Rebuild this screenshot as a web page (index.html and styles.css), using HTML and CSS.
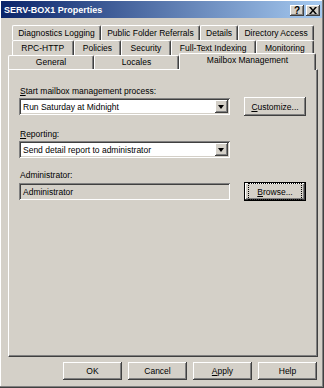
FILE: index.html
```html
<!DOCTYPE html>
<html lang="en">
<head>
  <meta charset="UTF-8">
  <title>SERV-BOX1 Properties</title>
  <link rel="stylesheet" href="styles.css">
</head>
<body>

<div class="window">
  <div class="titlebar">
    <span class="title">SERV-BOX1 Properties</span>
    <div class="title-buttons">
      <span class="tbtn help">?</span>
      <span class="tbtn">
        <svg width="8" height="7" viewBox="0 0 8 7"><path d="M0 0h2l2 2.5L6 0h2L5 3.5 8 7H6L4 4.5 2 7H0l3-3.5z" fill="#000"/></svg>
      </span>
    </div>
  </div>

  <div class="dialog">
    <!-- Tabs, back rows first -->
    <div class="tabs">
      <div class="tab-row back">
        <div class="tab">Diagnostics Logging</div>
        <div class="tab">Public Folder Referrals</div>
        <div class="tab">Details</div>
        <div class="tab">Directory Access</div>
      </div>
      <div class="tab-row back">
        <div class="tab">RPC-HTTP</div>
        <div class="tab">Policies</div>
        <div class="tab">Security</div>
        <div class="tab">Full-Text Indexing</div>
        <div class="tab">Monitoring</div>
      </div>
      <div class="tab-row front">
        <div class="tab">General</div>
        <div class="tab">Locales</div>
        <div class="tab selected">Mailbox Management</div>
      </div>
    </div>

    <div class="panel">
      <div class="field first">
        <label class="label"><u>S</u>tart mailbox management process:</label>
        <div class="field-row">
          <div class="combo">
            <span class="combo-text">Run Saturday at Midnight</span>
            <span class="combo-arrow"></span>
          </div>
          <div class="button side"><span><u>C</u>ustomize...</span></div>
        </div>
      </div>

      <div class="field">
        <label class="label"><u>R</u>eporting:</label>
        <div class="field-row">
          <div class="combo">
            <span class="combo-text">Send detail report to administrator</span>
            <span class="combo-arrow"></span>
          </div>
        </div>
      </div>

      <div class="field admin">
        <label class="label">Administrator:</label>
        <div class="field-row">
          <div class="textbox">Administrator</div>
          <div class="button side default"><span class="focus"><u>B</u>rowse...</span></div>
        </div>
      </div>
    </div>

    <div class="buttons">
      <div class="button">OK</div>
      <div class="button">Cancel</div>
      <div class="button"><span><u>A</u>pply</span></div>
      <div class="button">Help</div>
    </div>
  </div>
</div>

</body>
</html>
```

FILE: styles.css
```css
body {
  margin: 0;
  background: #d4d0c8;
}

.window {
  width: 324px;
  height: 388px;
  box-sizing: border-box;
  padding: 1px 2px 2px 1px;
  background: #d4d0c8;
  box-shadow: inset -1px -1px #404040, inset -2px -2px #808080, inset 1px 1px #fff;
  display: flex;
  flex-direction: column;
  font-family: "Liberation Sans", Arial, sans-serif;
  font-size: 8.5px;
  color: #000;
}

/* Title bar */
.titlebar {
  height: 17px;
  display: flex;
  align-items: center;
  justify-content: space-between;
  padding: 0 2px 0 3px;
  background: linear-gradient(to right, #0a246a, #a6caf0);
}

.title {
  color: #fff;
  font-weight: bold;
  font-size: 9px;
}

.title-buttons {
  display: flex;
  gap: 2px;
  margin-top: 1px;
}

.tbtn {
  width: 14px;
  height: 11px;
  display: flex;
  align-items: center;
  justify-content: center;
  background: #d4d0c8;
  box-shadow: inset -1px -1px #404040, inset 1px 1px #fff, inset -2px -2px #808080;
  font-weight: bold;
  font-size: 10px;
}

/* Dialog body */
.dialog {
  flex: 1;
  display: flex;
  flex-direction: column;
  padding: 7px 4px 0 7px;
}

.tabs {
  display: flex;
  flex-direction: column;
}

.tab-row {
  display: flex;
  align-items: flex-start;
}

.tab-row.back {
  margin-left: 4px;
  width: 302px;
  height: 15px;
}

.tab-row.front {
  width: 308px;
  height: 15px;
  margin-bottom: -1px;
}

.tab {
  flex: 1 1 auto;
  height: 14px;
  line-height: 14px;
  text-align: center;
  white-space: nowrap;
  border-top: 1px solid #fff;
  border-left: 1px solid #fff;
  border-right: 1px solid #404040;
  box-shadow: inset -1px 0 #808080;
  border-radius: 2px 2px 0 0;
}

.tab-row.front .tab {
  height: 13px;
  line-height: 13px;
}

.tab-row.front .tab.selected {
  height: 16px;
  line-height: 12px;
  margin-top: -2px;
  background: #d4d0c8;
  position: relative;
  z-index: 1;
}

.panel {
  height: 288px;
  box-sizing: border-box;
  border-top: 1px solid #fff;
  border-left: 1px solid #fff;
  border-right: 1px solid #404040;
  border-bottom: 1px solid #404040;
  box-shadow: inset -1px -1px #808080;
  padding: 15px 0 0 10px;
}

.field {
  margin-top: 13px;
}

.field.first {
  margin-top: 0;
}

.field.admin {
  margin-top: 11px;
}

.label {
  display: block;
  height: 12px;
  line-height: 12px;
  padding-left: 1px;
  margin-bottom: 1px;
}

.field.admin .label {
  margin-bottom: 2px;
}

.field-row {
  display: flex;
  align-items: center;
  gap: 14px;
  height: 17px;
}

.combo, .textbox {
  width: 211px;
  height: 17px;
  box-sizing: border-box;
  display: flex;
  align-items: center;
  padding: 2px;
  box-shadow: inset 1px 1px #808080, inset -1px -1px #fff, inset 2px 2px #404040, inset -2px -2px #d4d0c8;
}

.combo {
  background: #fff;
}

.combo-text {
  flex: 1;
  padding-left: 2px;
}

.combo-arrow {
  width: 13px;
  height: 13px;
  background: #d4d0c8;
  box-shadow: inset -1px -1px #404040, inset 1px 1px #fff, inset -2px -2px #808080;
  position: relative;
}

.combo-arrow::after {
  content: "";
  position: absolute;
  left: 3px;
  top: 5px;
  border-left: 3.5px solid transparent;
  border-right: 3.5px solid transparent;
  border-top: 4px solid #000;
}

.textbox {
  background: #d4d0c8;
  padding-left: 4px;
}

.button {
  width: 59px;
  height: 18px;
  box-sizing: border-box;
  display: flex;
  align-items: center;
  justify-content: center;
  background: #d4d0c8;
  box-shadow: inset -1px -1px #404040, inset 1px 1px #fff, inset -2px -2px #808080;
}

.button.side {
  width: 62px;
  height: 19px;
  flex-shrink: 0;
}

.button.default {
  border: 1px solid #000;
}

.focus {
  width: 100%;
  height: 100%;
  margin: 3px;
  box-sizing: border-box;
  display: flex;
  align-items: center;
  justify-content: center;
  outline: 1px dotted #000;
  outline-offset: -1px;
}

.buttons {
  display: flex;
  justify-content: flex-end;
  gap: 6px;
  margin: 5px 1px 0 0;
}
```
